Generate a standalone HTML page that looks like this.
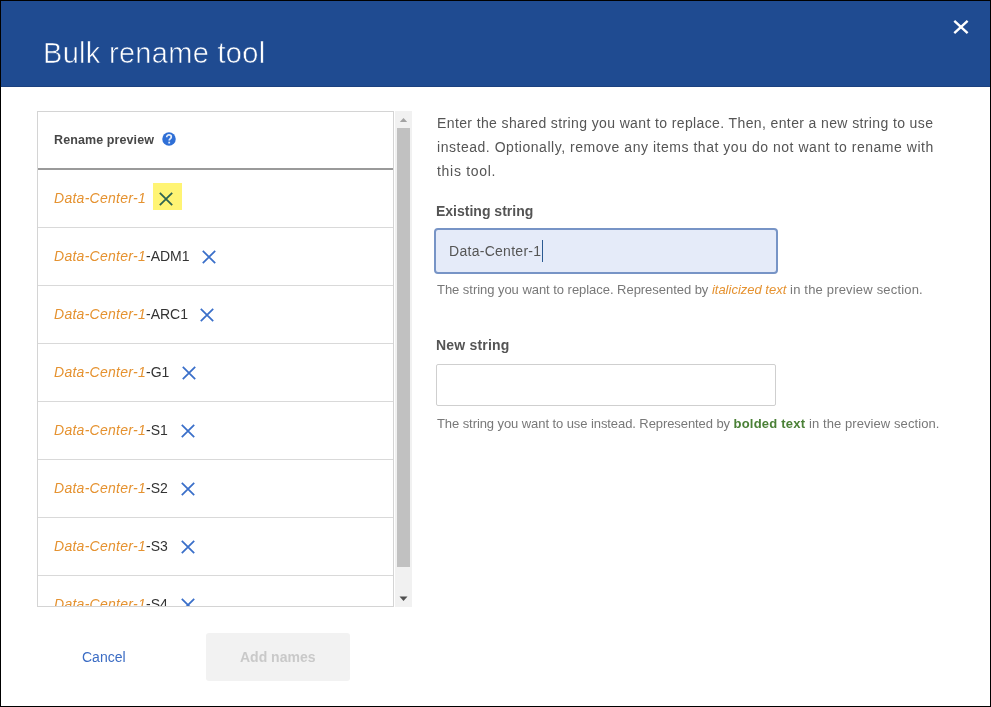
<!DOCTYPE html>
<html><head><meta charset="utf-8">
<style>
html,body{margin:0;padding:0;background:#fff;}
body{width:991px;height:707px;overflow:hidden;position:relative;font-family:"Liberation Sans",sans-serif;-webkit-font-smoothing:antialiased;}
.frame{position:absolute;left:0;top:0;width:991px;height:707px;box-sizing:border-box;border:1px solid #000;}
.a{position:absolute;white-space:nowrap;will-change:transform;}
.hdr{position:absolute;left:1px;top:1px;width:989px;height:86px;background:#1f4b91;}
.hdrline{position:absolute;left:1px;top:86px;width:989px;height:1px;background:#1c417f;}
.title{left:43px;top:36px;font-size:29px;line-height:34px;color:#fff;-webkit-text-stroke:0.6px #1f4b91;letter-spacing:0.3px;}
.panel{position:absolute;left:37px;top:111px;width:357px;height:496px;box-sizing:border-box;border:1px solid #d4d4d4;border-right-color:#d4d4d4;}
.hl{position:absolute;left:38px;top:168px;width:355px;height:2px;background:#9a9a9a;}
.sep{position:absolute;left:38px;width:355px;height:1px;background:#d9d9d9;}
.track{position:absolute;left:395px;top:111px;width:17px;height:496px;background:#f1f1f1;}
.thumb{position:absolute;left:397px;top:128px;width:13px;height:439px;background:#c1c1c1;}
.rp{left:54px;top:132px;letter-spacing:0.1px;font-size:12.5px;line-height:16px;font-weight:bold;color:#474747;}
.help{position:absolute;left:162px;top:132px;width:14px;height:14px;border-radius:50%;background:#2f6fd6;}
.row{left:54px;font-size:14px;line-height:18px;color:#333;}
.row i{color:#e59230;font-style:italic;letter-spacing:0.27px;}
.xi{position:absolute;width:14px;height:14px;}
.para{left:437px;font-size:14px;line-height:18px;color:#555;letter-spacing:0.37px;}
.lbl{left:436px;font-size:14px;line-height:18px;font-weight:bold;color:#545454;}
.help2{left:437px;font-size:13px;line-height:16px;color:#787878;}
.inp1{position:absolute;left:434px;top:228px;width:344px;height:46px;box-sizing:border-box;border:2px solid #7794c6;border-radius:4px;background:#e5ebf9;}
.inp2{position:absolute;left:436px;top:364px;width:340px;height:42px;box-sizing:border-box;border:1px solid #cfcfcf;border-radius:2px;background:#fff;}
.cancel{left:82px;top:648px;font-size:14px;line-height:18px;color:#3b6cc4;}
.btn{position:absolute;left:206px;top:633px;width:144px;height:48px;background:#f2f2f2;border-radius:3px;}
.btnt{left:240px;top:648px;font-size:14px;line-height:18px;font-weight:bold;color:#c9c9c9;}
</style></head>
<body>
<div class="hdr"></div>
<div class="hdrline"></div>
<div class="a title">Bulk rename tool</div>
<svg class="a" style="left:950px;top:17px" width="22" height="20" viewBox="0 0 22 20"><path d="M4.3 3.8 L17.6 16.1 M17.6 3.8 L4.3 16.1" stroke="#fff" stroke-width="2.4"/></svg>

<div class="panel"></div>
<div class="hl"></div>
<div class="sep" style="top:227px"></div>
<div class="sep" style="top:285px"></div>
<div class="sep" style="top:343px"></div>
<div class="sep" style="top:401px"></div>
<div class="sep" style="top:459px"></div>
<div class="sep" style="top:517px"></div>
<div class="sep" style="top:575px"></div>
<div class="track"></div>
<div class="thumb"></div>
<svg class="a" style="left:399px;top:117px" width="9" height="6" viewBox="0 0 9 6"><path d="M0.8 5 L4.5 1 L8.2 5 Z" fill="#a3a3a3"/></svg>
<svg class="a" style="left:399px;top:596px" width="9" height="6" viewBox="0 0 9 6"><path d="M0.5 0.5 L4.5 5 L8.5 0.5 Z" fill="#505050"/></svg>

<div class="a rp">Rename preview</div>
<svg class="a" style="left:162px;top:132px" width="14" height="14" viewBox="0 0 14 14"><circle cx="7" cy="7" r="6.75" fill="#2f6fd6"/><path d="M4.7 5.3 C4.7 3.7 5.7 2.9 7 2.9 C8.4 2.9 9.3 3.7 9.3 4.9 C9.3 6.5 7.2 6.6 7.2 8.6" fill="none" stroke="#e6eefb" stroke-width="1.7"/><rect x="6.3" y="9.7" width="1.8" height="1.8" fill="#e6eefb"/></svg>

<div class="a row" style="top:189px"><i>Data-Center-1</i></div>
<div class="a" style="left:153px;top:183px;width:29px;height:27px;background:#fff474;"></div>
<svg class="a" style="left:159px;top:192px" width="14" height="14" viewBox="0 0 14 14"><path d="M0.8 0.8 L13.2 13.2 M13.2 0.8 L0.8 13.2" stroke="#2f6452" stroke-width="1.8"/></svg>

<div class="a row" style="top:247px"><i>Data-Center-1</i>-ADM1</div>
<svg class="a" style="left:202px;top:250px" width="14" height="14" viewBox="0 0 14 14"><path d="M0.8 0.8 L13.2 13.2 M13.2 0.8 L0.8 13.2" stroke="#3a6fc9" stroke-width="1.75"/></svg>
<div class="a row" style="top:305px"><i>Data-Center-1</i>-ARC1</div>
<svg class="a" style="left:199.5px;top:308px" width="14" height="14" viewBox="0 0 14 14"><path d="M0.8 0.8 L13.2 13.2 M13.2 0.8 L0.8 13.2" stroke="#3a6fc9" stroke-width="1.75"/></svg>
<div class="a row" style="top:363px"><i>Data-Center-1</i>-G1</div>
<svg class="a" style="left:181.7px;top:366px" width="14" height="14" viewBox="0 0 14 14"><path d="M0.8 0.8 L13.2 13.2 M13.2 0.8 L0.8 13.2" stroke="#3a6fc9" stroke-width="1.75"/></svg>
<div class="a row" style="top:421px"><i>Data-Center-1</i>-S1</div>
<svg class="a" style="left:180.5px;top:424px" width="14" height="14" viewBox="0 0 14 14"><path d="M0.8 0.8 L13.2 13.2 M13.2 0.8 L0.8 13.2" stroke="#3a6fc9" stroke-width="1.75"/></svg>
<div class="a row" style="top:479px"><i>Data-Center-1</i>-S2</div>
<svg class="a" style="left:180.5px;top:482px" width="14" height="14" viewBox="0 0 14 14"><path d="M0.8 0.8 L13.2 13.2 M13.2 0.8 L0.8 13.2" stroke="#3a6fc9" stroke-width="1.75"/></svg>
<div class="a row" style="top:537px"><i>Data-Center-1</i>-S3</div>
<svg class="a" style="left:180.5px;top:540px" width="14" height="14" viewBox="0 0 14 14"><path d="M0.8 0.8 L13.2 13.2 M13.2 0.8 L0.8 13.2" stroke="#3a6fc9" stroke-width="1.75"/></svg>
<div class="a" style="left:38px;top:576px;width:355px;height:30px;overflow:hidden;">
  <div class="a row" style="left:16px;top:19px"><i>Data-Center-1</i>-S4</div>
  <svg class="a" style="left:142.5px;top:22px" width="14" height="14" viewBox="0 0 14 14"><path d="M0.8 0.8 L13.2 13.2 M13.2 0.8 L0.8 13.2" stroke="#3a6fc9" stroke-width="1.75"/></svg>
</div>

<div class="a para" style="top:114px;letter-spacing:0.38px">Enter the shared string you want to replace. Then, enter a new string to use</div>
<div class="a para" style="top:138px;letter-spacing:0.53px">instead. Optionally, remove any items that you do not want to rename with</div>
<div class="a para" style="top:162px;letter-spacing:0.7px">this tool.</div>

<div class="a lbl" style="top:202px">Existing string</div>
<div class="inp1"></div>
<div class="a" style="left:449px;top:242px;font-size:14px;line-height:18px;color:#555;letter-spacing:0.28px">Data-Center-1</div>
<div class="a" style="left:541.5px;top:240px;width:1px;height:22px;background:#2b5a92;"></div>
<div class="a help2" style="top:282px"><span style="letter-spacing:-0.04px">The string you want to replace. Represented by </span><i style="color:#e59230">italicized text</i><span style="letter-spacing:0.18px"> in the preview section.</span></div>

<div class="a lbl" style="top:336px;letter-spacing:0.2px">New string</div>
<div class="inp2"></div>
<div class="a help2" style="top:416px"><span style="letter-spacing:-0.08px">The string you want to use instead. Represented by </span><b style="color:#4a8036;letter-spacing:0.22px">bolded text</b><span style="letter-spacing:0.08px"> in the preview section.</span></div>

<div class="a cancel">Cancel</div>
<div class="btn"></div>
<div class="a btnt">Add names</div>

<div class="frame"></div>
</body></html>
